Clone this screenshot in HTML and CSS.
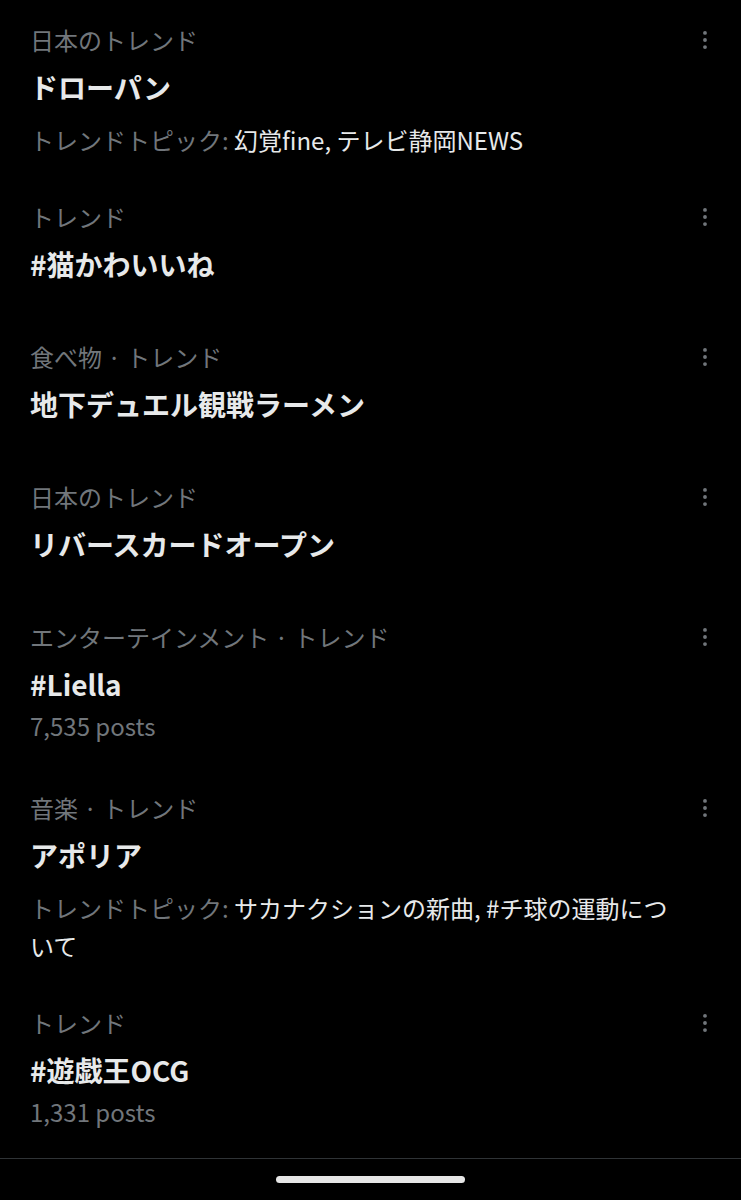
FILE: index.html
```html
<!DOCTYPE html>
<html lang="ja">
<head>
<meta charset="utf-8">
<title>トレンド</title>
<link rel="stylesheet" href="styles.css">
</head>
<body>
<main class="trends">
  <article class="trend trend--topic">
    <div class="trend-cat">日本のトレンド</div>
    <svg class="more" viewBox="0 0 24 24" aria-hidden="true"><circle cx="12" cy="3.5" r="2.3"/><circle cx="12" cy="12" r="2.3"/><circle cx="12" cy="20.5" r="2.3"/></svg>
    <div class="trend-title">ドローパン</div>
    <div class="trend-topics"><span class="label">トレンドトピック:</span> 幻覚fine, テレビ静岡NEWS</div>
  </article>
  <article class="trend trend--plain">
    <div class="trend-cat">トレンド</div>
    <svg class="more" viewBox="0 0 24 24" aria-hidden="true"><circle cx="12" cy="3.5" r="2.3"/><circle cx="12" cy="12" r="2.3"/><circle cx="12" cy="20.5" r="2.3"/></svg>
    <div class="trend-title">#猫かわいいね</div>
  </article>
  <article class="trend trend--plain">
    <div class="trend-cat">食べ物 · トレンド</div>
    <svg class="more" viewBox="0 0 24 24" aria-hidden="true"><circle cx="12" cy="3.5" r="2.3"/><circle cx="12" cy="12" r="2.3"/><circle cx="12" cy="20.5" r="2.3"/></svg>
    <div class="trend-title">地下デュエル観戦ラーメン</div>
  </article>
  <article class="trend trend--plain">
    <div class="trend-cat">日本のトレンド</div>
    <svg class="more" viewBox="0 0 24 24" aria-hidden="true"><circle cx="12" cy="3.5" r="2.3"/><circle cx="12" cy="12" r="2.3"/><circle cx="12" cy="20.5" r="2.3"/></svg>
    <div class="trend-title">リバースカードオープン</div>
  </article>
  <article class="trend trend--posts">
    <div class="trend-cat">エンターテインメント · トレンド</div>
    <svg class="more" viewBox="0 0 24 24" aria-hidden="true"><circle cx="12" cy="3.5" r="2.3"/><circle cx="12" cy="12" r="2.3"/><circle cx="12" cy="20.5" r="2.3"/></svg>
    <div class="trend-title">#Liella</div>
    <div class="trend-count">7,535 posts</div>
  </article>
  <article class="trend trend--topic">
    <div class="trend-cat">音楽 · トレンド</div>
    <svg class="more" viewBox="0 0 24 24" aria-hidden="true"><circle cx="12" cy="3.5" r="2.3"/><circle cx="12" cy="12" r="2.3"/><circle cx="12" cy="20.5" r="2.3"/></svg>
    <div class="trend-title">アポリア</div>
    <div class="trend-topics"><span class="label">トレンドトピック:</span> サカナクションの新曲, #チ球の運動について</div>
  </article>
  <article class="trend trend--posts trend--last">
    <div class="trend-cat">トレンド</div>
    <svg class="more" viewBox="0 0 24 24" aria-hidden="true"><circle cx="12" cy="3.5" r="2.3"/><circle cx="12" cy="12" r="2.3"/><circle cx="12" cy="20.5" r="2.3"/></svg>
    <div class="trend-title">#遊戯王OCG</div>
    <div class="trend-count">1,331 posts</div>
  </article>
</main>
<footer class="home-area">
  <div class="home-bar"></div>
</footer>
</body>
</html>
```

FILE: styles.css
```css
html, body {
  margin: 0;
  padding: 0;
  background: #000;
}

body {
  width: 741px;
  height: 1200px;
  overflow: hidden;
  font-family: "Noto Sans CJK JP", "Noto Sans", sans-serif;
  color: #e7e9ea;
  display: flex;
  flex-direction: column;
}

.trends {
  flex: 1;
  padding-top: 5px;
}

.trend {
  display: grid;
  grid-template-columns: 1fr 24px;
  column-gap: 15px;
  padding: 20px 24px 0 30px;
}

.trend--plain { padding-bottom: 41px; }
.trend--topic { padding-bottom: 23px; }
.trend--posts { padding-bottom: 32px; }
.trend--last { padding-bottom: 30px; }

.trend-cat {
  grid-column: 1;
  grid-row: 1;
  font-size: 24px;
  line-height: 30px;
  color: #71767b;
  margin-bottom: 15px;
}

.more {
  grid-column: 2;
  grid-row: 1;
  width: 24px;
  height: 20px;
  margin-top: 5px;
  fill: #71767b;
}

.trend-title {
  grid-column: 1;
  font-size: 28px;
  line-height: 34px;
  font-weight: 700;
  color: #e7e9ea;
}

.trend-topics {
  grid-column: 1;
  margin-top: 17px;
  font-size: 24px;
  line-height: 38px;
  color: #e7e9ea;
}

.trend-topics .label {
  color: #71767b;
}

.trend-count {
  grid-column: 1;
  margin-top: 10px;
  font-size: 24px;
  line-height: 30px;
  color: #71767b;
}

.home-area {
  height: 41px;
  border-top: 1px solid #2f3336;
  display: flex;
  justify-content: center;
}

.home-bar {
  margin-top: 17px;
  width: 189px;
  height: 7px;
  border-radius: 4px;
  background: #e6e6e6;
}
```
